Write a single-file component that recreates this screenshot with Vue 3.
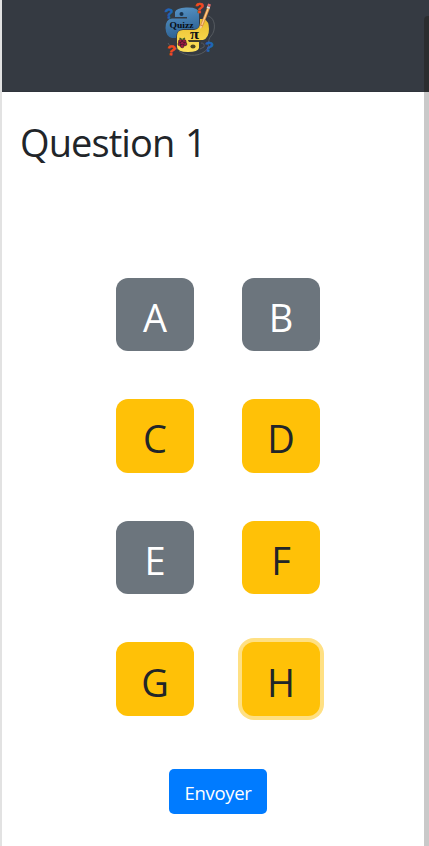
<script setup>
import { ref } from 'vue'

const answers = ref([
  { label: 'A', chosen: false },
  { label: 'B', chosen: false },
  { label: 'C', chosen: true },
  { label: 'D', chosen: true },
  { label: 'E', chosen: false },
  { label: 'F', chosen: true },
  { label: 'G', chosen: true },
  { label: 'H', chosen: true },
])
const focused = ref('H')

function toggle(answer) {
  answer.chosen = !answer.chosen
  focused.value = answer.label
}
</script>

<template>
  <div class="page">
    <header class="navbar">
      <svg class="logo" width="70" height="62" viewBox="0 0 70 62">
        <defs>
          <linearGradient id="blue" x1="0" y1="0" x2="0.300" y2="1">
            <stop offset="0" stop-color="#5b98ca" />
            <stop offset="1" stop-color="#2d6294" />
          </linearGradient>
          <linearGradient id="yellow" x1="0" y1="0" x2="0" y2="1">
            <stop offset="0" stop-color="#e9be2c" />
            <stop offset="1" stop-color="#ffe25c" />
          </linearGradient>
        </defs>
        <g fill="none" stroke="#555a60" stroke-width="1">
          <path d="M53 16C61 18 61 31 56 36C51 41 57 47 49 52C42 57 30 56 24 51" />
          <path d="M46 43Q50 43 49 47L45 49M13 43Q16 49 23 49" />
        </g>
        <path d="M20 19V12Q21 8 31 7.500Q44 7 44 13V25Q44 29 39 29H28Q21 30 21 38H17Q11 37 10.500 28Q10.500 19 17 18.500H32V17H20Z" fill="url(#blue)" />
        <circle cx="26.500" cy="14" r="2" fill="#173451" />
        <path d="M45 19H49Q54 21 54 29Q54 38 48 40H34V42H44V48Q43 52 33 52Q22.500 52 22 47V36Q22 30 28 30H39Q45 29 45 23Z" fill="url(#yellow)" />
        <path d="M33 40.700H46" stroke="#4b421d" stroke-width="1.200" />
        <ellipse cx="38" cy="46.500" rx="2.600" ry="2" fill="#514820" />
        <text class="pi" x="35" y="38.500" textLength="9" lengthAdjust="spacingAndGlyphs">π</text>
        <g fill="#a51b45" stroke="#3a1824" stroke-width=".7">
          <circle cx="25.500" cy="41.500" r="2" /><circle cx="29" cy="41.500" r="2" />
          <circle cx="24.800" cy="44" r="1.800" /><circle cx="30" cy="44" r="1.800" />
          <circle cx="27.200" cy="43.500" r="2" /><circle cx="27.200" cy="46" r="1.800" />
        </g>
        <path d="M27 39.500L24.500 38M27.500 39.500L30 38" stroke="#335b27" stroke-width="1.400" />
        <path d="M46 27L53.500 8" stroke="#d88b42" stroke-width="3" />
        <path d="M46.800 25L53 9" stroke="#ffd08d" stroke-width="1.200" />
        <path d="M53 8.500L53.700 6.500" stroke="#d9e0dc" stroke-width="3" />
        <path d="M53.700 6.500L54.500 4" stroke="#df6b69" stroke-width="3" />
        <path d="M45 29L45.200 25.500L47.500 26.500Z" fill="#f3d2a2" />
        <text class="wordmark" x="14.500" y="27.500" textLength="24" lengthAdjust="spacingAndGlyphs">Quizz</text>
        <g class="marks">
          <text x="9.500" y="18.500" fill="#1f66b8" stroke="#1f66b8" textLength="9" lengthAdjust="spacingAndGlyphs" transform="rotate(-4 14 13)">?</text>
          <text x="40" y="13" fill="#f34a1e" stroke="#f34a1e" textLength="9" lengthAdjust="spacingAndGlyphs">?</text>
          <text x="12" y="55" fill="#f34a1e" stroke="#f34a1e" textLength="9" lengthAdjust="spacingAndGlyphs" transform="rotate(5 16 50)">?</text>
          <text x="50" y="51.500" fill="#1f66b8" stroke="#1f66b8" textLength="9" lengthAdjust="spacingAndGlyphs" transform="rotate(10 54 46)">?</text>
        </g>
      </svg>
    </header>

    <main class="content">
      <h1 class="title">Question 1</h1>
      <div class="answers">
        <button
          v-for="answer in answers"
          :key="answer.label"
          class="answer"
          :class="{ chosen: answer.chosen, focused: focused === answer.label }"
          @click="toggle(answer)"
        >{{ answer.label }}</button>
      </div>
      <button class="submit"><span>Envoyer</span></button>
    </main>
    <div class="scrollbar"></div>
  </div>
</template>

<style>
body {
  overflow: hidden;
  background: #fff;
}
</style>

<style scoped>
.page {
  position: relative;
  box-sizing: border-box;
  height: 846px;
  border-left: 2px solid #e2e2e2;
  overflow: hidden;
  color: #212529;
  font-family: "Segoe UI", "Open Sans", "Noto Sans", sans-serif;
}
.navbar {
  box-sizing: border-box;
  height: 92px;
  padding-left: 153px;
  background: #353a42;
  border-bottom: 1px solid #30343c;
}
.logo {
  display: block;
}
.wordmark {
  font: bold 9px "Liberation Serif", serif;
  fill: #080d14;
}
.pi {
  font: bold 14px "Liberation Serif", serif;
  fill: #101315;
}
.marks {
  font: bold 14px "Liberation Sans", sans-serif;
  stroke-width: 0.5px;
}
.content {
  display: flex;
  flex-direction: column;
  align-items: center;
}
.title {
  align-self: stretch;
  margin: 0;
  padding: 27px 0 0 18px;
  font-size: 38px;
  font-weight: 400;
  line-height: 46px;
  letter-spacing: -0.9px;
  word-spacing: 1.5px;
}
.answers {
  display: grid;
  grid-template-columns: 78px 78px;
  grid-template-rows: 73px 74px 73px 74px;
  gap: 48px;
  margin: 113px 0 0 5px;
}
.answer {
  display: flex;
  justify-content: center;
  align-items: flex-start;
  margin: 0;
  padding: 11px 0 0;
  border: 0;
  border-radius: 12px;
  background: #6c757d;
  color: #fff;
  font-family: inherit;
  font-size: 38px;
  line-height: 56px;
}
.answer:nth-child(n + 7) {
  padding-top: 12px;
}
.answer.chosen {
  background: #ffc107;
  color: #212529;
}
.answer.focused {
  outline: none;
  box-shadow: 0 0 0 4px #ffe083;
}
.submit {
  width: 98px;
  height: 45px;
  margin: 53px 0 0 5px;
  padding: 2px 0 0;
  border: 0;
  border-radius: 5px;
  background: #007bff;
  color: #fff;
  font-family: inherit;
  font-size: 18.5px;
  letter-spacing: -0.3px;
}
.scrollbar {
  position: absolute;
  top: 16px;
  right: 0;
  bottom: 0;
  width: 5px;
  border-radius: 4px 0 0 0;
  background: linear-gradient(#2b2d2f 76px, #c9c9c9 76px);
}
</style>
